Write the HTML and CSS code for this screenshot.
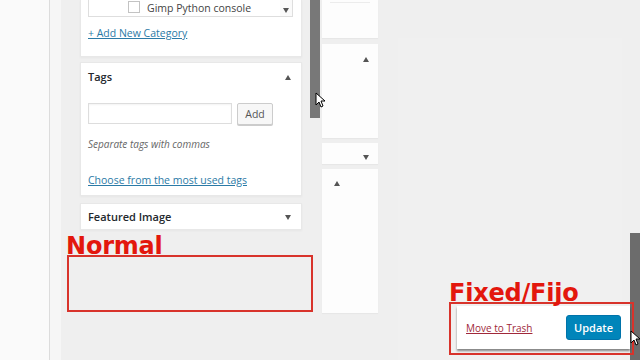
FILE: index.html
```html
<!DOCTYPE html>
<html>
<head>
<meta charset="utf-8">
<link rel="stylesheet" href="styles.css">
</head>
<body>
<div class="screen">
  <div class="rail"></div>
  <div class="side-col">
    <div class="sidebar">
      <div class="box cats">
        <div class="catlist">
          <div class="catrow"><span class="chk"></span><span class="catname">Gimp Python console</span></div>
          <div class="listscroll"><span class="tri down"></span></div>
        </div>
        <a class="link addcat">+ Add New Category</a>
      </div>
      <div class="box tags">
        <div class="boxhead"><span>Tags</span><span class="tri up"></span></div>
        <div class="taginput"><span class="input"></span><span class="btn">Add</span></div>
        <p class="howto">Separate tags with commas</p>
        <a class="link choose">Choose from the most used tags</a>
      </div>
      <div class="box feat">
        <div class="boxhead"><span>Featured Image</span><span class="tri down"></span></div>
      </div>
    </div>
  </div>
  <div class="scroll-col"><div class="thumb"></div></div>
  <div class="mid-col">
    <div class="mbox m1"><span class="faint"></span></div>
    <div class="mbox m2"><span class="tri up"></span></div>
    <div class="mbox m3"><span class="tri down"></span></div>
    <div class="mbox m4"><span class="tri up"></span></div>
  </div>
  <div class="main-col"><div class="ghost"></div></div>
  <div class="scroll-col right"><div class="thumb"></div></div>

  <div class="note note-normal">
    <span class="note-label">Normal</span>
    <div class="note-box"></div>
  </div>

  <div class="note note-fixed">
    <span class="note-label">Fixed/Fijo</span>
    <div class="note-box">
      <div class="publish">
        <a class="trash">Move to Trash</a>
        <span class="update">Update</span>
      </div>
    </div>
  </div>

  <svg class="cursor c1" width="10" height="16" viewBox="0 0 10 16"><path d="M1 1 L1 13 L4 10 L6 15 L8 14 L6 9 L10 9 Z" fill="#fff" stroke="#000" stroke-width="1"/></svg>
  <svg class="cursor c2" width="10" height="16" viewBox="0 0 10 16"><path d="M1 1 L1 13 L4 10 L6 15 L8 14 L6 9 L10 9 Z" fill="#fff" stroke="#000" stroke-width="1"/></svg>
</div>
</body>
</html>
```

FILE: styles.css
```css
* { box-sizing: border-box; }
html, body { margin: 0; padding: 0; }
body {
  width: 640px;
  height: 360px;
  overflow: hidden;
  background: #efefef;
  font-family: "Open Sans", "Noto Sans", sans-serif;
  color: #23282d;
}
.screen {
  position: relative;
  display: flex;
  width: 640px;
  height: 360px;
  overflow: hidden;
}
.rail {
  width: 50px;
  flex: none;
  background: #fafafa;
  border-right: 1px solid #dcdcdc;
}
.side-col {
  width: 260px;
  flex: none;
  padding-left: 30px;
  background: linear-gradient(to right, #f6f6f6 0, #f6f6f6 11px, #efefef 11px);
}
.sidebar {
  width: 222px;
  display: flex;
  flex-direction: column;
}
.box {
  background: #fff;
  border: 1px solid #e8e8e8;
  border-top: none;
  box-shadow: 0 1px 2px rgba(0,0,0,0.04);
  padding: 0 8px 0 7px;
}
.cats { height: 57px; }
.tags { height: 134px; margin-top: 5px; border-top: 1px solid #e8e8e8; }
.feat { height: 27px; margin-top: 7px; border-top: 1px solid #e8e8e8; }

.catlist {
  position: relative;
  display: flex;
  height: 17px;
  width: 205px;
  border: 1px solid #dedede;
  border-top: none;
}
.catrow {
  display: flex;
  align-items: center;
  padding-left: 39px;
  flex: 1;
}
.chk {
  width: 12px;
  height: 12px;
  border: 1px solid #c3c3c3;
  background: #fff;
  margin-right: 7px;
  margin-top: -2px;
}
.catname {
  font-size: 10.5px;
  color: #444;
  line-height: 14px;
  margin-top: -1px;
}
.listscroll {
  width: 12px;
  display: flex;
  align-items: flex-start;
  justify-content: center;
  padding-top: 8px;
  background: #fafafa;
}
.link {
  display: block;
  color: #2b7aa6;
  text-decoration: underline;
  font-size: 10.5px;
  line-height: 14px;
}
.addcat { margin-top: 9px; }

.tri {
  display: inline-block;
  width: 0;
  height: 0;
  border-left: 3.5px solid transparent;
  border-right: 3.5px solid transparent;
}
.tri.up { border-bottom: 5px solid #555; }
.tri.down { border-top: 5px solid #555; }

.boxhead {
  display: flex;
  justify-content: space-between;
  align-items: center;
  font-size: 11px;
  font-weight: 600;
  line-height: 16px;
  padding-right: 2px;
}
.tags .boxhead { margin-top: 6px; }
.feat .boxhead { margin-top: 5px; }

.taginput {
  display: flex;
  margin-top: 18px;
  gap: 5px;
}
.input {
  width: 144px;
  height: 21px;
  border: 1px solid #ddd;
  box-shadow: inset 0 1px 2px rgba(0,0,0,0.05);
}
.btn {
  width: 36px;
  height: 22px;
  border: 1px solid #ccc;
  border-radius: 2px;
  background: #f7f7f7;
  box-shadow: 0 1px 0 #ccc;
  font-size: 10.5px;
  color: #555;
  display: flex;
  align-items: center;
  justify-content: center;
}
.howto {
  margin: 12px 0 0;
  font-size: 10px;
  line-height: 14px;
  font-style: italic;
  color: #666;
}
.choose { margin-top: 22px; }

.scroll-col {
  width: 10px;
  flex: none;
}
.scroll-col .thumb {
  height: 118px;
  background: #787878;
}
.scroll-col.right {
  display: flex;
  flex-direction: column;
  justify-content: flex-end;
}
.scroll-col.right .thumb {
  height: 127px;
  background: #6c6c6c;
}

.mid-col {
  width: 60px;
  flex: none;
  padding: 0 2px;
  display: flex;
  flex-direction: column;
}
.mbox {
  background: #fdfdfd;
  box-shadow: 0 1px 1px rgba(0,0,0,0.03);
  display: flex;
}
.m1 { height: 38px; padding: 2px 8px 0; }
.faint { display: block; height: 1px; width: 40px; background: #ececec; }
.m2 { height: 94px; margin-top: 6px; justify-content: flex-end; padding: 13px 9px 0 0; }
.m3 { height: 21px; margin-top: 5px; justify-content: flex-end; padding: 12px 9px 0 0; }
.m4 { height: 144px; margin-top: 5px; padding: 12px 0 0 12px; }

.main-col {
  width: 250px;
  flex: none;
  padding: 38px 8px 0 18px;
}
.ghost {
  height: 100%;
  background: #f0f0f0;
}

.note { position: absolute; }
.note-label {
  display: block;
  font-family: "DejaVu Sans", sans-serif;
  font-weight: bold;
  font-size: 24px;
  line-height: 20px;
  color: #e3170d;
  letter-spacing: -0.2px;
}
.note-box {
  border: 2px solid #d8332b;
}
.note-normal { left: 66px; top: 236px; }
.note-normal .note-box {
  width: 246px;
  height: 57px;
  margin-left: 1px;
  margin-top: -1px;
}
.note-fixed { left: 449px; top: 283px; }
.note-fixed .note-box {
  width: 185px;
  height: 53px;
  margin-top: -1px;
  padding: 2px 2px 0 6px;
}
.publish {
  height: 43px;
  background: #fff;
  box-shadow: 0 2px 2px rgba(0,0,0,0.45);
  display: flex;
  align-items: center;
  justify-content: space-between;
  padding: 0 9px 0 9px;
}
.trash {
  color: #a0283a;
  font-size: 10px;
  text-decoration: underline;
}
.update {
  width: 55px;
  height: 25px;
  background: #0085ba;
  border: 1px solid #0073aa;
  border-radius: 3px;
  color: #fff;
  font-size: 11px;
  font-weight: 600;
  display: flex;
  align-items: center;
  justify-content: center;
}

.cursor { position: absolute; }
.c1 { left: 315px; top: 92px; }
.c2 { left: 630px; top: 330px; }
```
